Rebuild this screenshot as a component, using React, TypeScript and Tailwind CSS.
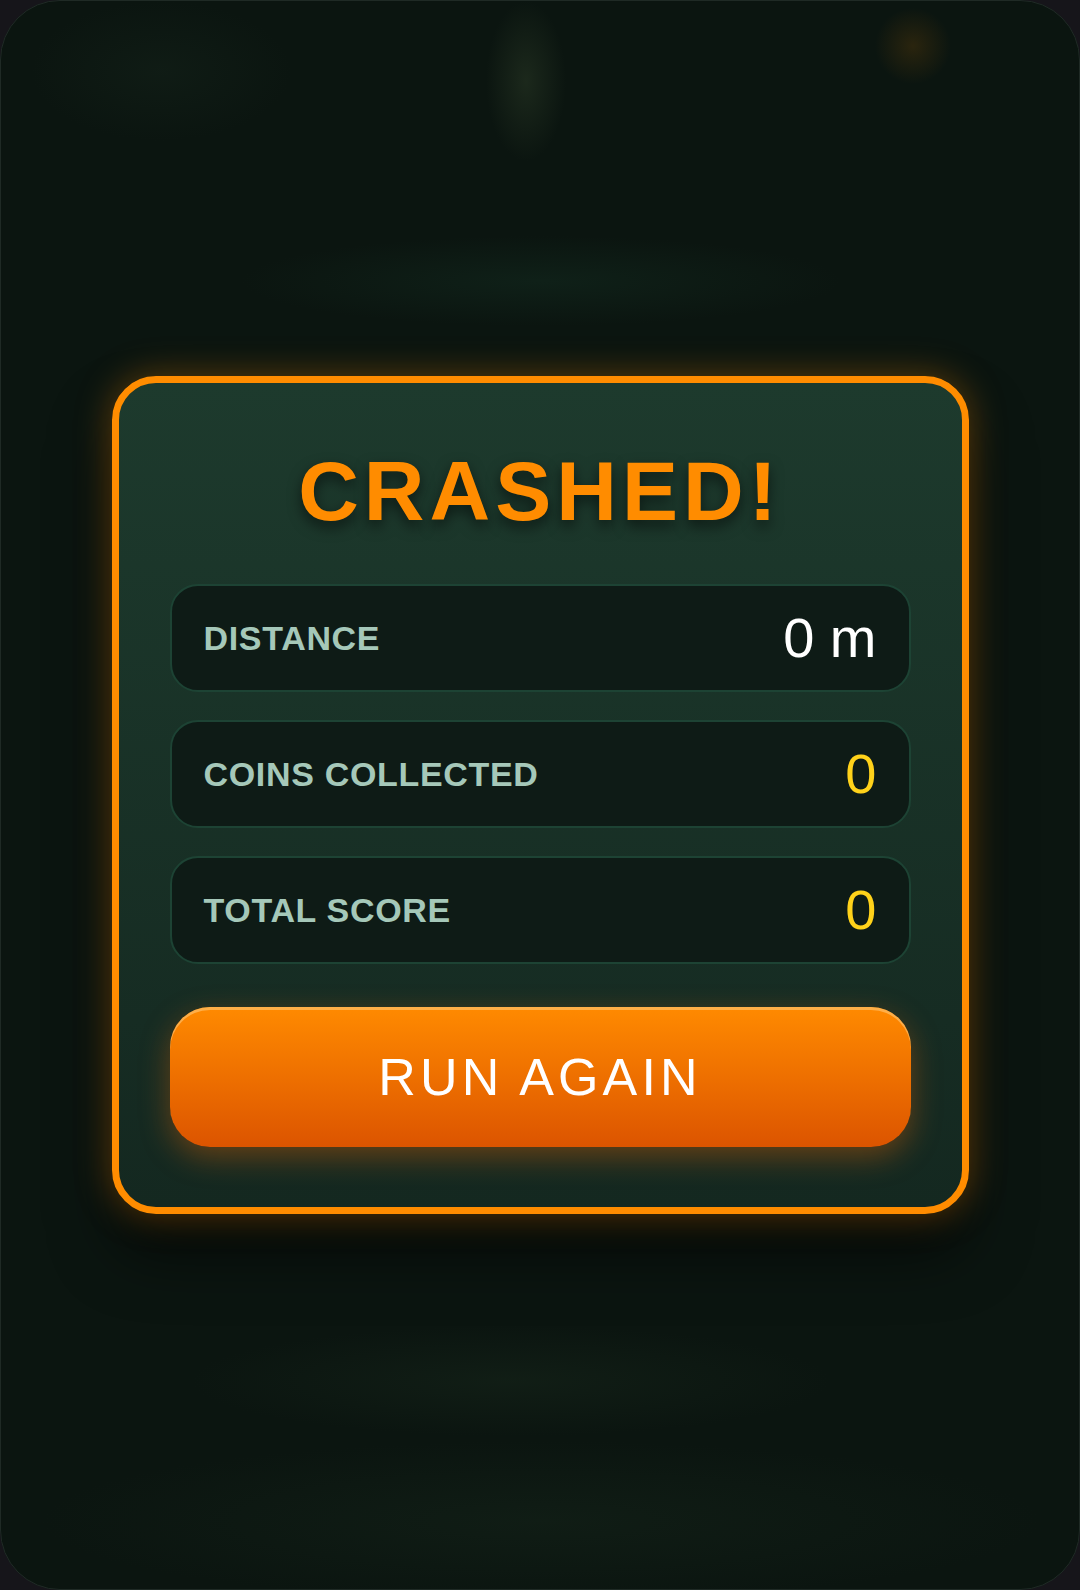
import React from 'react';

const FONT = { fontFamily: '"Liberation Sans", Arial, sans-serif' };

interface StatRowProps {
  label: string;
  value: string;
  highlight?: boolean;
}

function StatRow({ label, value, highlight }: StatRowProps) {
  return (
    <div className="flex h-[108px] items-center justify-between rounded-[28px] border-2 border-[#1d4334] bg-[#0e1b16] px-8">
      <span className="text-[34px] font-bold uppercase tracking-[0.02em] text-[#a5c8b9]">
        {label}
      </span>
      <span
        className={`text-[56px] leading-none ${highlight ? 'text-[#ffd21a]' : 'text-white'}`}
      >
        {value}
      </span>
    </div>
  );
}

export default function App() {
  return (
    <div className="h-[1590px] w-[1080px] bg-[#16151a]" style={FONT}>
      {/* frame; the soft gradients stand in for the blurred game scene behind the overlay */}
      <div className="flex h-full w-full items-center justify-center rounded-[60px] border border-[#1f2a25] bg-[#0b1510] bg-[radial-gradient(40px_80px_at_525px_80px,rgba(48,64,42,0.45),transparent),radial-gradient(38px_38px_at_912px_45px,rgba(100,65,10,0.35),transparent),radial-gradient(130px_70px_at_160px_70px,rgba(24,40,30,0.35),transparent),radial-gradient(300px_45px_at_540px_280px,rgba(20,46,34,0.45),transparent),radial-gradient(320px_55px_at_510px_1380px,rgba(24,40,28,0.45),transparent),radial-gradient(500px_80px_at_540px_1520px,rgba(22,38,27,0.45),transparent)]">
        <div className="w-[857px] rounded-[44px] border-[7px] border-[#ff8c00] bg-gradient-to-b from-[#1d3a2d] to-[#142820] px-[51px] pb-[60px] pt-[66px] shadow-[0_0_36px_rgba(255,140,0,0.35),0_40px_60px_rgba(0,0,0,0.55)]">
          <h1 className="text-center text-[84px] font-bold leading-none tracking-[0.06em] text-[#ff8c00] [text-shadow:0_6px_14px_rgba(0,0,0,0.55)]">
            CRASHED!
          </h1>
          <div className="mt-[51px] flex flex-col gap-[28px]">
            <StatRow label="Distance" value="0 m" />
            <StatRow label="Coins Collected" value="0" highlight />
            <StatRow label="Total Score" value="0" highlight />
          </div>
          <button
            type="button"
            className="mt-[43px] flex h-[140px] w-full items-center justify-center rounded-[40px] bg-gradient-to-b from-[#ff8a00] to-[#dc5400] text-[52px] tracking-[0.08em] text-white shadow-[inset_0_3px_0_rgba(255,200,120,0.6),0_10px_30px_rgba(255,110,0,0.35)]"
          >
            RUN AGAIN
          </button>
        </div>
      </div>
    </div>
  );
}
